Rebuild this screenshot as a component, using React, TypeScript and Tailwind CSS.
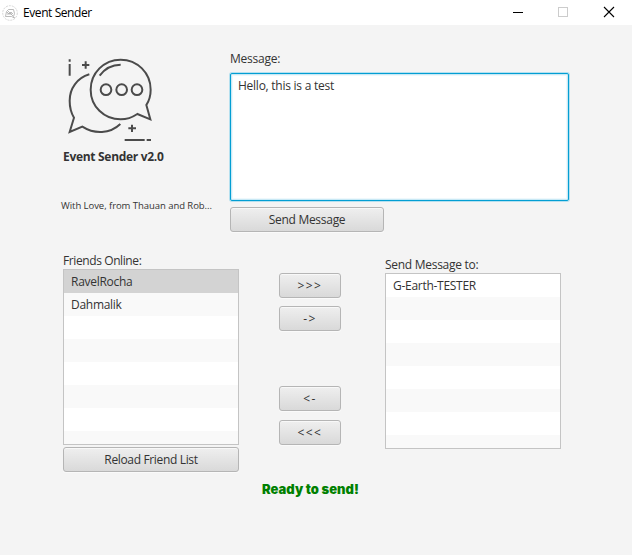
import React from "react";

const buttonStyle =
  "flex shrink-0 items-center justify-center whitespace-nowrap rounded-[3px] border border-[#b5b5b5] bg-gradient-to-b from-[#efefef] to-[#d9d9d9] shadow-[inset_0_1px_0_#f8f8f8,0_1px_0_#fafafa]";

function ChatLogo() {
  return (
    <svg
      className="ml-[-6px] block h-[100px] w-[110px]"
      viewBox="0 0 330 300"
      fill="none"
      stroke="#4b4b4b"
      strokeWidth="6"
    >
      <path d="M274 165 C283 151 287 136 287 119 C287 69 247 29 197 29 C147 29 107 69 107 119 C107 169 147 208 197 208 C216 208 232 202 247 192 L286 208 Z" />
      <path d="M134 77 C149 56 170 44 197 44" />
      <circle cx="153" cy="119" r="16" />
      <circle cx="200" cy="119" r="16" />
      <circle cx="246" cy="119" r="16" />
      <path d="M103 73 C66 84 44 116 44 152 C44 171 48 188 57 203 L44 246 L82 230 C118 253 165 252 196 222" />
      <path d="M44 28v7M44 42v35M81 45h22M92 34v22M220 235h23M231 224v22M209 270h60M275 270h13" />
    </svg>
  );
}

function FriendList({ names, selected }: { names: string[]; selected?: number }) {
  return (
    <div className="h-44 w-44 shrink-0 overflow-hidden border border-[#c4c4c4] bg-white">
      {Array.from({ length: 8 }, (_, i) => (
        <div
          key={i}
          className={`flex h-[23px] items-center px-[7px] whitespace-nowrap tracking-[-0.28px] ${
            selected === i ? "bg-[#d3d3d3]" : i % 2 ? "bg-[#f9f9f9]" : "bg-white"
          }`}
        >
          {names[i]}
        </div>
      ))}
    </div>
  );
}

export default function App() {
  return (
    <div className="h-[555px] w-[632px] overflow-hidden bg-[#f4f4f4] font-['Open_Sans','Noto_Sans',sans-serif] text-[12px] leading-4 text-[#333]">
      <header className="flex h-[25px] items-center bg-white text-black">
        <svg className="ml-[2px] h-4 w-4" viewBox="0 0 16 16" fill="none" stroke="#aaa">
          <circle cx="8" cy="8" r="7.3" stroke="#d5d5d5" strokeDasharray="2 1" />
          <path d="M3.5 11.5l1-5 2-2h5l1 4-1 3 1 1.500-3-1.500H3.500M5 7l2 2 2-2 2 2M6 6l5 5M5 9h5" strokeWidth=".8" />
        </svg>
        <h1 className="ml-[5px] grow whitespace-nowrap tracking-[-0.42px]">Event Sender</h1>
        <svg className="h-[25px] w-[142px]" viewBox="0 0 142 25" fill="none" shapeRendering="crispEdges">
          <path d="M23 12.5h10" stroke="#000" />
          <path d="M68.5 7.5h9v9h-9z" stroke="#ccc" />
          <path d="M114 7l10 10M124 7l-10 10" stroke="#000" strokeWidth="1.1" shapeRendering="auto" />
        </svg>
      </header>

      <main>
        <section className="flex h-[226px] pt-[25px] pl-[61px]">
          <div className="w-[169px] shrink-0">
            <ChatLogo />
            <p className="mt-[-1px] ml-[2px] whitespace-nowrap font-bold tracking-[-0.3px]">Event Sender v2.0</p>
            <p className="mt-[33px] whitespace-nowrap text-[9.500px] tracking-[-0.05px]">With Love, from Thauan and Rob...</p>
          </div>
          <div className="pt-px">
            <p className="whitespace-nowrap tracking-[-0.24px]">Message:</p>
            <div className="mt-[6px] h-[128px] w-[339px] rounded-[2px] border border-[#039ed3] bg-white px-[7px] pt-[4px] tracking-[-0.25px] shadow-[inset_0_0_0_1px_#c9e9f5,inset_0_0_0_2px_#eef8fc,0_0_0_1px_#b5e0ef]">
              Hello, this is a test
            </div>
            <button className={`${buttonStyle} mt-[6px] h-[25px] w-[154px] pt-px tracking-[-0.28px]`}>Send Message</button>
          </div>
        </section>

        <section className="flex h-[222px] pl-[63px]">
          <div className="w-44 pt-[2px]">
            <p className="whitespace-nowrap tracking-[-0.4px]">Friends Online:</p>
            <FriendList names={["RavelRocha", "Dahmalik"]} selected={0} />
            <button className={`${buttonStyle} mt-[2px] h-[25px] w-44 tracking-[-0.34px]`}>Reload Friend List</button>
          </div>
          <div className="ml-10 flex w-[62px] flex-col pt-[22px]">
            <button className={`${buttonStyle} h-[25px] tracking-[1.4px]`}>&gt;&gt;&gt;</button>
            <button className={`${buttonStyle} mt-2 h-[25px] tracking-[1.4px]`}>-&gt;</button>
            <button className={`${buttonStyle} mt-[55px] h-[25px] tracking-[1.4px]`}>&lt;-</button>
            <button className={`${buttonStyle} mt-[9px] h-[25px] tracking-[1.4px]`}>&lt;&lt;&lt;</button>
          </div>
          <div className="ml-11 w-44 pt-[6px]">
            <p className="whitespace-nowrap tracking-[-0.28px]">Send Message to:</p>
            <FriendList names={["G-Earth-TESTER"]} />
          </div>
        </section>

        <p className="mt-[8px] ml-[262px] whitespace-nowrap font-['Inter','Liberation_Sans',sans-serif] text-[13px] leading-4 font-black text-[#008000]">
          Ready to send!
        </p>
      </main>
    </div>
  );
}
